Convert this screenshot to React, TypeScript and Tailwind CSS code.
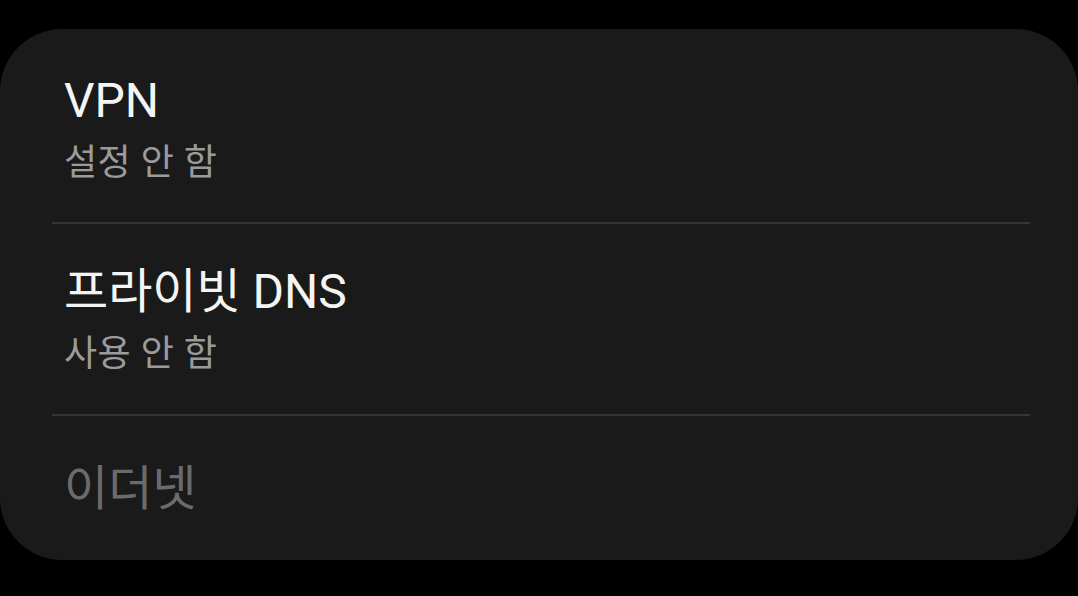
import React from "react";

const font = { fontFamily: '"Roboto", "Noto Sans CJK KR", sans-serif' };

function Row({
  title,
  sub,
  dim,
}: {
  title: string;
  sub?: string;
  dim?: boolean;
}) {
  return (
    <div className="px-[64px]">
      <div
        className={`text-[48px] leading-[56px] ${dim ? "text-[#6b6b6b]" : "text-[#f4f4f4]"}`}
      >
        {title}
      </div>
      {sub && (
        <div className="mt-[12px] text-[36px] leading-[44px] tracking-[0.5px] text-[#9b9b9b]">
          {sub}
        </div>
      )}
    </div>
  );
}

export default function App() {
  return (
    <div className="w-[1078px] h-[596px] bg-black pt-[29px]" style={font}>
      <div className="h-[531px] rounded-[62px] bg-[#1a1a1a] flex flex-col">
        <div className="h-[193px] pt-[44px]">
          <Row title="VPN" sub="설정 안 함" />
        </div>
        <div className="ml-[52px] mr-[48px] h-[2px] bg-[#353535]" />
        <div className="h-[190px] pt-[40px]">
          <Row title="프라이빗 DNS" sub="사용 안 함" />
        </div>
        <div className="ml-[52px] mr-[48px] h-[2px] bg-[#353535]" />
        <div className="pt-[45px]">
          <Row title="이더넷" dim />
        </div>
      </div>
    </div>
  );
}
